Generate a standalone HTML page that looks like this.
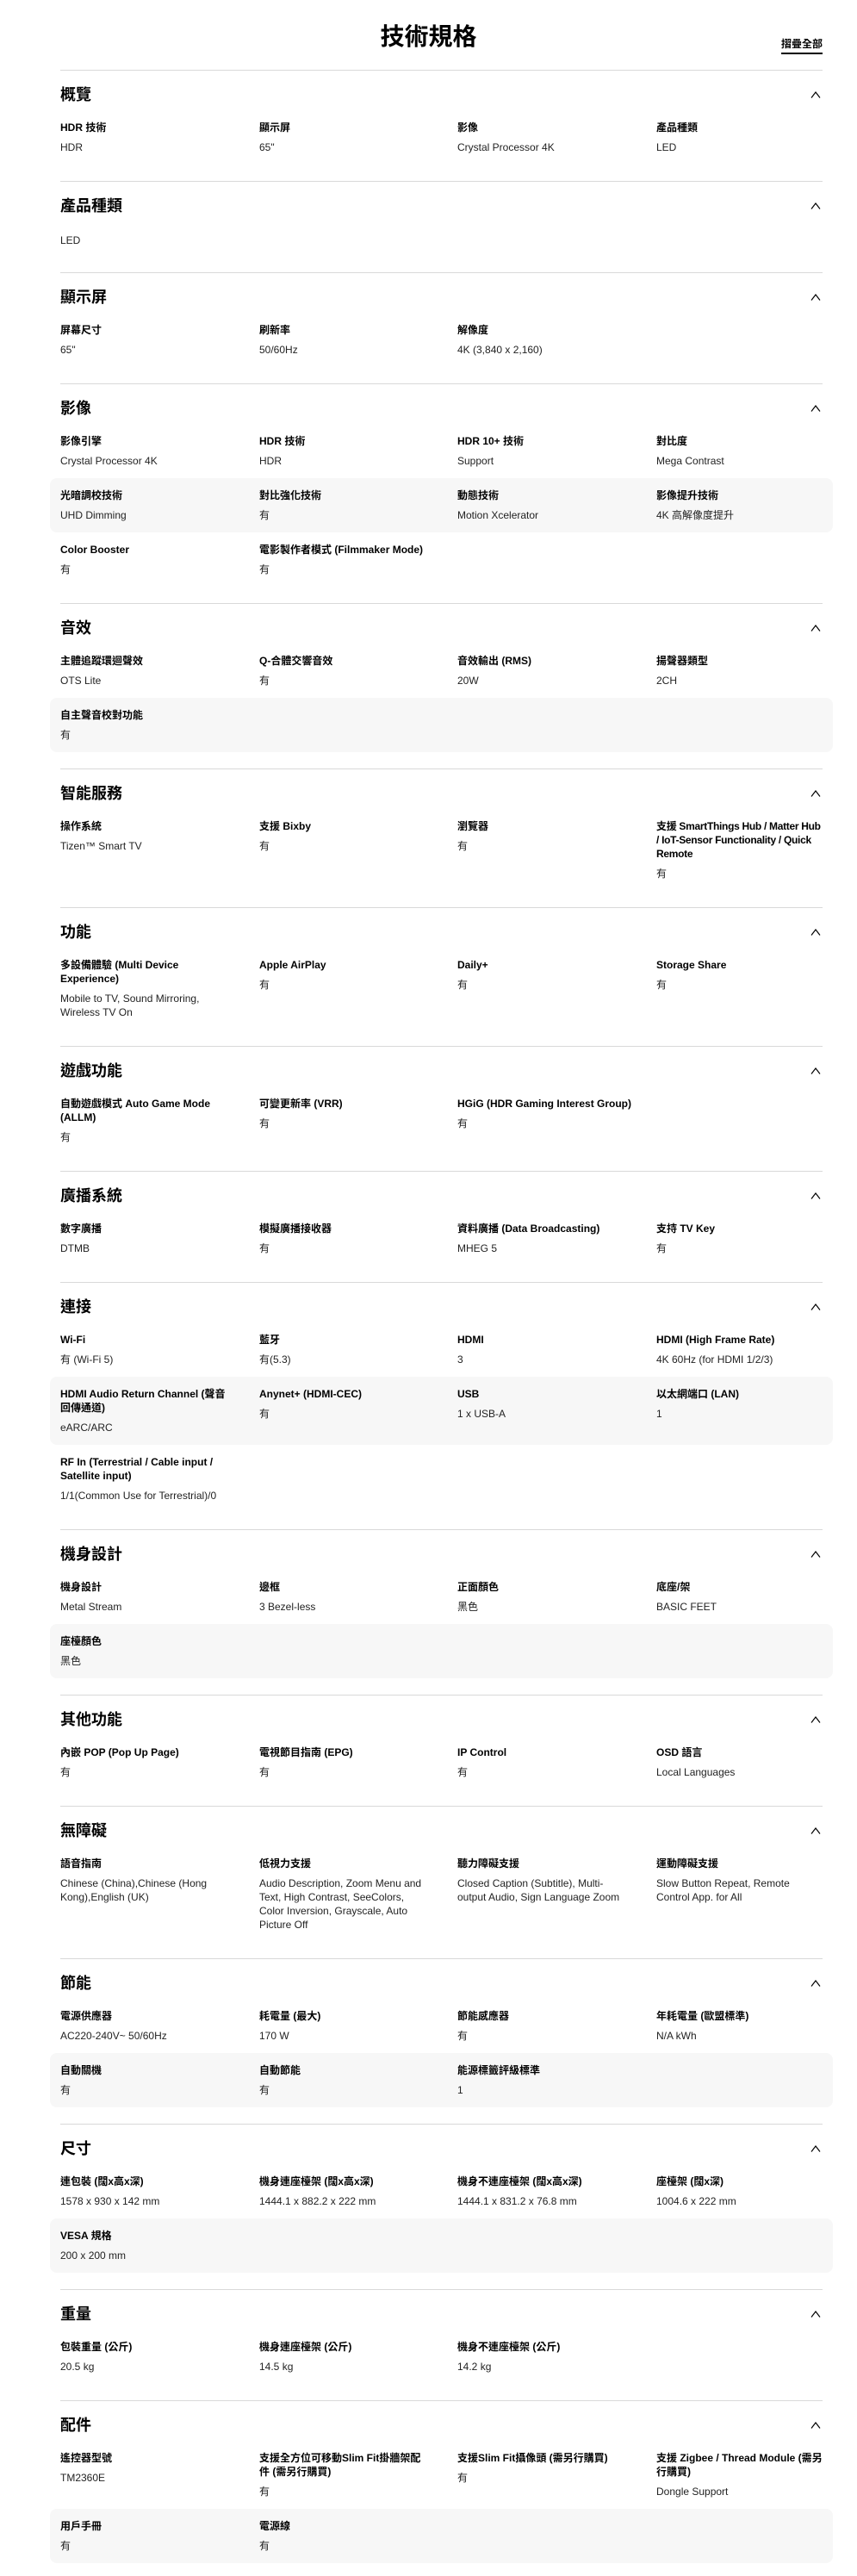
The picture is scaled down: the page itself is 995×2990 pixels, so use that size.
<!DOCTYPE html>
<html><head><meta charset="utf-8">
<style>
*{margin:0;padding:0;box-sizing:border-box}
body{width:995px;height:2990px;background:#fff;font-family:"Liberation Sans","Noto Sans CJK TC",sans-serif;color:#000;position:relative;overflow:hidden}
.title{position:absolute;top:25px;left:0;width:995px;text-align:center;font-size:28px;font-weight:bold;line-height:36px}
.collapse{position:absolute;top:43px;right:40px;font-size:12px;font-weight:bold;line-height:16px;padding-bottom:2px;border-bottom:2px solid #000}
.wrap{position:absolute;top:81px;left:58px;width:909px}
.sec{border-top:1px solid #d9d9d9;margin:0 12px;padding-bottom:19px;position:relative}
.sec h2{font-size:18px;font-weight:bold;line-height:20px;padding-top:18px;height:46px}
.chev{position:absolute;right:2px;top:24px;width:12px;height:8px}
.rows{margin:0 -12px}
.row{display:grid;grid-template-columns:231px 230px 231px 205px;padding:12px 12px;border-radius:8px}
.row:nth-child(even){background:#f7f7f7}
.c .l{font-size:12px;font-weight:bold;line-height:16px;white-space:nowrap}
.c .v{font-size:12px;line-height:16px;margin-top:7px;color:#222;white-space:nowrap}
</style></head><body>
<div class="title">技術規格</div>
<div class="collapse">摺疊全部</div>
<div class="wrap">

<div class="sec"><h2>概覽</h2><svg class="chev" viewBox="0 0 12 8"><polyline points="1,7.5 6,1 11,7.5" fill="none" stroke="#000" stroke-width="1.2"/></svg>
<div class="rows"><div class="row">
<div class="c"><div class="l">HDR 技術</div><div class="v">HDR</div></div>
<div class="c"><div class="l">顯示屏</div><div class="v">65"</div></div>
<div class="c"><div class="l">影像</div><div class="v">Crystal Processor 4K</div></div>
<div class="c"><div class="l">產品種類</div><div class="v">LED</div></div>
</div></div></div>

<div class="sec"><h2>產品種類</h2><svg class="chev" viewBox="0 0 12 8"><polyline points="1,7.5 6,1 11,7.5" fill="none" stroke="#000" stroke-width="1.2"/></svg>
<div class="rows"><div class="row" style="padding-top:0;padding-bottom:10px">
<div class="c"><div class="v" style="margin-top:14px">LED</div></div>
</div></div></div>

<div class="sec"><h2>顯示屏</h2><svg class="chev" viewBox="0 0 12 8"><polyline points="1,7.5 6,1 11,7.5" fill="none" stroke="#000" stroke-width="1.2"/></svg>
<div class="rows"><div class="row">
<div class="c"><div class="l">屏幕尺寸</div><div class="v">65"</div></div>
<div class="c"><div class="l">刷新率</div><div class="v">50/60Hz</div></div>
<div class="c"><div class="l">解像度</div><div class="v">4K (3,840 x 2,160)</div></div>
</div></div></div>

<div class="sec"><h2>影像</h2><svg class="chev" viewBox="0 0 12 8"><polyline points="1,7.5 6,1 11,7.5" fill="none" stroke="#000" stroke-width="1.2"/></svg>
<div class="rows"><div class="row">
<div class="c"><div class="l">影像引擎</div><div class="v">Crystal Processor 4K</div></div>
<div class="c"><div class="l">HDR 技術</div><div class="v">HDR</div></div>
<div class="c"><div class="l">HDR 10+ 技術</div><div class="v">Support</div></div>
<div class="c"><div class="l">對比度</div><div class="v">Mega Contrast</div></div>
</div><div class="row">
<div class="c"><div class="l">光暗調校技術</div><div class="v">UHD Dimming</div></div>
<div class="c"><div class="l">對比強化技術</div><div class="v">有</div></div>
<div class="c"><div class="l">動態技術</div><div class="v">Motion Xcelerator</div></div>
<div class="c"><div class="l">影像提升技術</div><div class="v">4K 高解像度提升</div></div>
</div><div class="row">
<div class="c"><div class="l">Color Booster</div><div class="v">有</div></div>
<div class="c"><div class="l">電影製作者模式 (Filmmaker Mode)</div><div class="v">有</div></div>
</div></div></div>

<div class="sec"><h2>音效</h2><svg class="chev" viewBox="0 0 12 8"><polyline points="1,7.5 6,1 11,7.5" fill="none" stroke="#000" stroke-width="1.2"/></svg>
<div class="rows"><div class="row">
<div class="c"><div class="l">主體追蹤環迴聲效</div><div class="v">OTS Lite</div></div>
<div class="c"><div class="l">Q-合體交響音效</div><div class="v">有</div></div>
<div class="c"><div class="l">音效輸出 (RMS)</div><div class="v">20W</div></div>
<div class="c"><div class="l">揚聲器類型</div><div class="v">2CH</div></div>
</div><div class="row">
<div class="c"><div class="l">自主聲音校對功能</div><div class="v">有</div></div>
</div></div></div>

<div class="sec"><h2>智能服務</h2><svg class="chev" viewBox="0 0 12 8"><polyline points="1,7.5 6,1 11,7.5" fill="none" stroke="#000" stroke-width="1.2"/></svg>
<div class="rows"><div class="row">
<div class="c"><div class="l">操作系統</div><div class="v">Tizen™ Smart TV</div></div>
<div class="c"><div class="l">支援 Bixby</div><div class="v">有</div></div>
<div class="c"><div class="l">瀏覽器</div><div class="v">有</div></div>
<div class="c"><div class="l" style="letter-spacing:-0.3px">支援 SmartThings Hub / Matter Hub<br>/ IoT-Sensor Functionality / Quick<br>Remote</div><div class="v">有</div></div>
</div></div></div>

<div class="sec"><h2>功能</h2><svg class="chev" viewBox="0 0 12 8"><polyline points="1,7.5 6,1 11,7.5" fill="none" stroke="#000" stroke-width="1.2"/></svg>
<div class="rows"><div class="row">
<div class="c"><div class="l">多設備體驗 (Multi Device<br>Experience)</div><div class="v">Mobile to TV, Sound Mirroring,<br>Wireless TV On</div></div>
<div class="c"><div class="l">Apple AirPlay</div><div class="v">有</div></div>
<div class="c"><div class="l">Daily+</div><div class="v">有</div></div>
<div class="c"><div class="l">Storage Share</div><div class="v">有</div></div>
</div></div></div>

<div class="sec"><h2>遊戲功能</h2><svg class="chev" viewBox="0 0 12 8"><polyline points="1,7.5 6,1 11,7.5" fill="none" stroke="#000" stroke-width="1.2"/></svg>
<div class="rows"><div class="row">
<div class="c"><div class="l">自動遊戲模式 Auto Game Mode<br>(ALLM)</div><div class="v">有</div></div>
<div class="c"><div class="l">可變更新率 (VRR)</div><div class="v">有</div></div>
<div class="c"><div class="l">HGiG (HDR Gaming Interest Group)</div><div class="v">有</div></div>
</div></div></div>

<div class="sec"><h2>廣播系統</h2><svg class="chev" viewBox="0 0 12 8"><polyline points="1,7.5 6,1 11,7.5" fill="none" stroke="#000" stroke-width="1.2"/></svg>
<div class="rows"><div class="row">
<div class="c"><div class="l">數字廣播</div><div class="v">DTMB</div></div>
<div class="c"><div class="l">模擬廣播接收器</div><div class="v">有</div></div>
<div class="c"><div class="l">資料廣播 (Data Broadcasting)</div><div class="v">MHEG 5</div></div>
<div class="c"><div class="l">支持 TV Key</div><div class="v">有</div></div>
</div></div></div>

<div class="sec"><h2>連接</h2><svg class="chev" viewBox="0 0 12 8"><polyline points="1,7.5 6,1 11,7.5" fill="none" stroke="#000" stroke-width="1.2"/></svg>
<div class="rows"><div class="row">
<div class="c"><div class="l">Wi-Fi</div><div class="v">有 (Wi-Fi 5)</div></div>
<div class="c"><div class="l">藍牙</div><div class="v">有(5.3)</div></div>
<div class="c"><div class="l">HDMI</div><div class="v">3</div></div>
<div class="c"><div class="l">HDMI (High Frame Rate)</div><div class="v">4K 60Hz (for HDMI 1/2/3)</div></div>
</div><div class="row">
<div class="c"><div class="l">HDMI Audio Return Channel (聲音<br>回傳通道)</div><div class="v">eARC/ARC</div></div>
<div class="c"><div class="l">Anynet+ (HDMI-CEC)</div><div class="v">有</div></div>
<div class="c"><div class="l">USB</div><div class="v">1 x USB-A</div></div>
<div class="c"><div class="l">以太網端口 (LAN)</div><div class="v">1</div></div>
</div><div class="row">
<div class="c"><div class="l">RF In (Terrestrial / Cable input /<br>Satellite input)</div><div class="v">1/1(Common Use for Terrestrial)/0</div></div>
</div></div></div>

<div class="sec"><h2>機身設計</h2><svg class="chev" viewBox="0 0 12 8"><polyline points="1,7.5 6,1 11,7.5" fill="none" stroke="#000" stroke-width="1.2"/></svg>
<div class="rows"><div class="row">
<div class="c"><div class="l">機身設計</div><div class="v">Metal Stream</div></div>
<div class="c"><div class="l">邊框</div><div class="v">3 Bezel-less</div></div>
<div class="c"><div class="l">正面顏色</div><div class="v">黑色</div></div>
<div class="c"><div class="l">底座/架</div><div class="v">BASIC FEET</div></div>
</div><div class="row">
<div class="c"><div class="l">座檯顏色</div><div class="v">黑色</div></div>
</div></div></div>

<div class="sec"><h2>其他功能</h2><svg class="chev" viewBox="0 0 12 8"><polyline points="1,7.5 6,1 11,7.5" fill="none" stroke="#000" stroke-width="1.2"/></svg>
<div class="rows"><div class="row">
<div class="c"><div class="l">內嵌 POP (Pop Up Page)</div><div class="v">有</div></div>
<div class="c"><div class="l">電視節目指南 (EPG)</div><div class="v">有</div></div>
<div class="c"><div class="l">IP Control</div><div class="v">有</div></div>
<div class="c"><div class="l">OSD 語言</div><div class="v">Local Languages</div></div>
</div></div></div>

<div class="sec"><h2>無障礙</h2><svg class="chev" viewBox="0 0 12 8"><polyline points="1,7.5 6,1 11,7.5" fill="none" stroke="#000" stroke-width="1.2"/></svg>
<div class="rows"><div class="row">
<div class="c"><div class="l">語音指南</div><div class="v">Chinese (China),Chinese (Hong<br>Kong),English (UK)</div></div>
<div class="c"><div class="l">低視力支援</div><div class="v">Audio Description, Zoom Menu and<br>Text, High Contrast, SeeColors,<br>Color Inversion, Grayscale, Auto<br>Picture Off</div></div>
<div class="c"><div class="l">聽力障礙支援</div><div class="v">Closed Caption (Subtitle), Multi-<br>output Audio, Sign Language Zoom</div></div>
<div class="c"><div class="l">運動障礙支援</div><div class="v">Slow Button Repeat, Remote<br>Control App. for All</div></div>
</div></div></div>

<div class="sec"><h2>節能</h2><svg class="chev" viewBox="0 0 12 8"><polyline points="1,7.5 6,1 11,7.5" fill="none" stroke="#000" stroke-width="1.2"/></svg>
<div class="rows"><div class="row">
<div class="c"><div class="l">電源供應器</div><div class="v">AC220-240V~ 50/60Hz</div></div>
<div class="c"><div class="l">耗電量 (最大)</div><div class="v">170 W</div></div>
<div class="c"><div class="l">節能感應器</div><div class="v">有</div></div>
<div class="c"><div class="l">年耗電量 (歐盟標準)</div><div class="v">N/A kWh</div></div>
</div><div class="row">
<div class="c"><div class="l">自動關機</div><div class="v">有</div></div>
<div class="c"><div class="l">自動節能</div><div class="v">有</div></div>
<div class="c"><div class="l">能源標籤評級標準</div><div class="v">1</div></div>
</div></div></div>

<div class="sec"><h2>尺寸</h2><svg class="chev" viewBox="0 0 12 8"><polyline points="1,7.5 6,1 11,7.5" fill="none" stroke="#000" stroke-width="1.2"/></svg>
<div class="rows"><div class="row">
<div class="c"><div class="l">連包裝 (闊x高x深)</div><div class="v">1578 x 930 x 142 mm</div></div>
<div class="c"><div class="l">機身連座檯架 (闊x高x深)</div><div class="v">1444.1 x 882.2 x 222 mm</div></div>
<div class="c"><div class="l">機身不連座檯架 (闊x高x深)</div><div class="v">1444.1 x 831.2 x 76.8 mm</div></div>
<div class="c"><div class="l">座檯架 (闊x深)</div><div class="v">1004.6 x 222 mm</div></div>
</div><div class="row">
<div class="c"><div class="l">VESA 規格</div><div class="v">200 x 200 mm</div></div>
</div></div></div>

<div class="sec"><h2>重量</h2><svg class="chev" viewBox="0 0 12 8"><polyline points="1,7.5 6,1 11,7.5" fill="none" stroke="#000" stroke-width="1.2"/></svg>
<div class="rows"><div class="row">
<div class="c"><div class="l">包裝重量 (公斤)</div><div class="v">20.5 kg</div></div>
<div class="c"><div class="l">機身連座檯架 (公斤)</div><div class="v">14.5 kg</div></div>
<div class="c"><div class="l">機身不連座檯架 (公斤)</div><div class="v">14.2 kg</div></div>
</div></div></div>

<div class="sec" style="padding-bottom:0"><h2>配件</h2><svg class="chev" viewBox="0 0 12 8"><polyline points="1,7.5 6,1 11,7.5" fill="none" stroke="#000" stroke-width="1.2"/></svg>
<div class="rows"><div class="row">
<div class="c"><div class="l">遙控器型號</div><div class="v">TM2360E</div></div>
<div class="c"><div class="l">支援全方位可移動Slim Fit掛牆架配<br>件 (需另行購買)</div><div class="v">有</div></div>
<div class="c"><div class="l">支援Slim Fit攝像頭 (需另行購買)</div><div class="v">有</div></div>
<div class="c"><div class="l">支援 Zigbee / Thread Module (需另<br>行購買)</div><div class="v">Dongle Support</div></div>
</div><div class="row">
<div class="c"><div class="l">用戶手冊</div><div class="v">有</div></div>
<div class="c"><div class="l">電源線</div><div class="v">有</div></div>
</div></div></div>

</div>
</body></html>
